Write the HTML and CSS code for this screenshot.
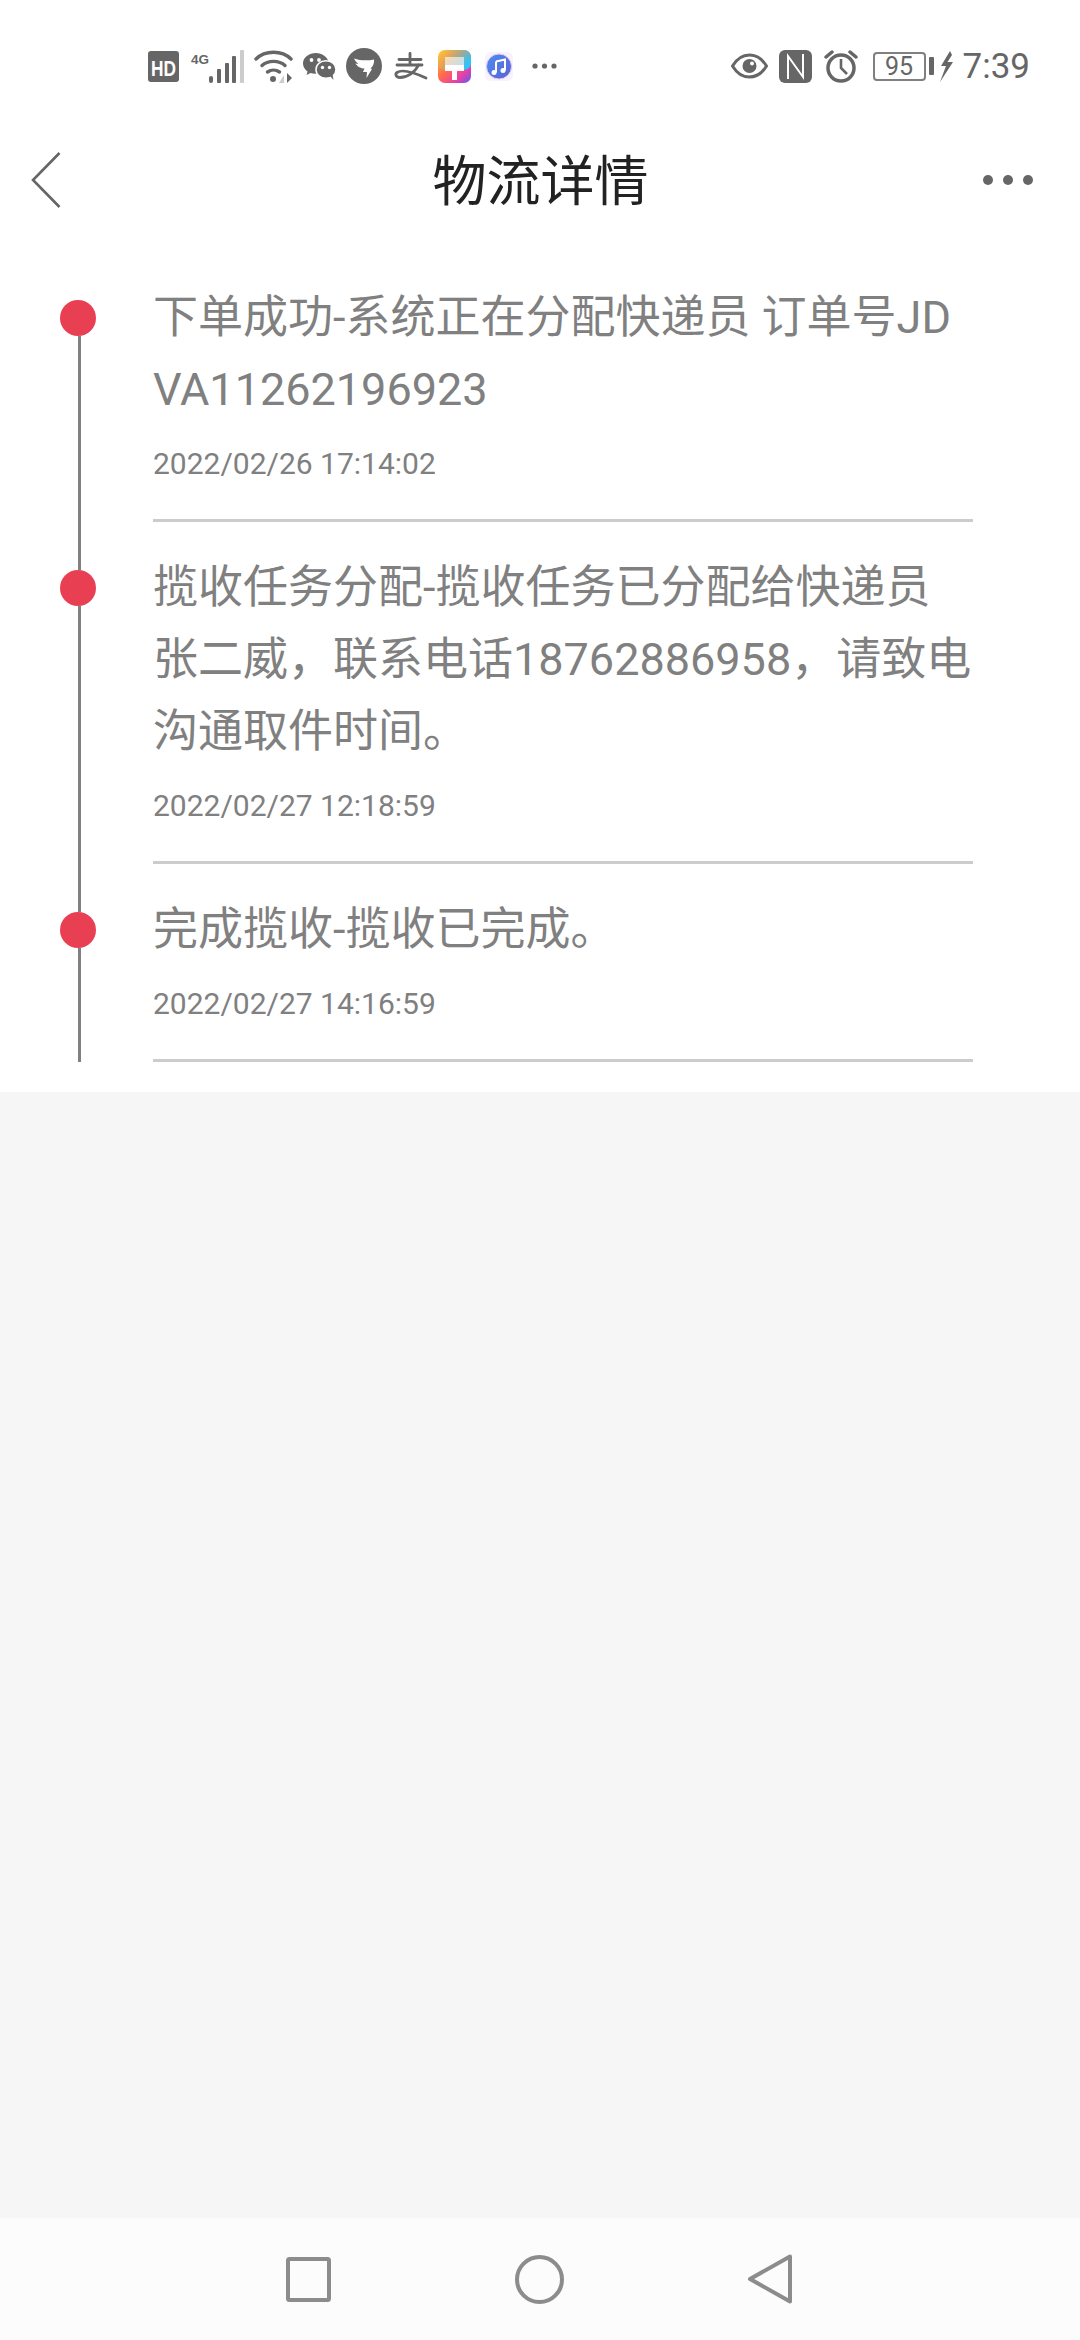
FILE: index.html
```html
<!DOCTYPE html>
<html lang="zh-CN">
<head>
    <meta charset="UTF-8">
    <meta name="viewport" content="width=device-width, initial-scale=1.0">
    <title>物流详情</title>
    <link rel="stylesheet" href="styles.css">
</head>
<body>
    <div class="status-bar">
        <div class="status-left">
            <svg class="ic-hd" width="31" height="31" viewBox="0 0 31 31">
                <rect width="31" height="31" rx="3" fill="#666"/>
                <text transform="translate(3 24.500) scale(1 1.250)" textLength="25" lengthAdjust="spacingAndGlyphs" class="hd-text">HD</text>
            </svg>
            <svg class="ic-signal" width="53" height="33" viewBox="0 0 53 33">
                <text x="0" y="14" textLength="18" lengthAdjust="spacingAndGlyphs" class="net-text">4G</text>
                <rect x="18" y="26" width="4" height="7" rx="2" fill="#666"/>
                <rect x="26" y="19" width="4" height="14" rx="1" fill="#666"/>
                <rect x="34" y="13" width="4" height="20" rx="1" fill="#666"/>
                <rect x="41" y="6" width="4" height="27" rx="1" fill="#666"/>
                <rect x="49" y="0" width="4" height="33" rx="1" fill="#ccc"/>
            </svg>
            <svg class="ic-wifi" width="39" height="33" viewBox="0 0 39 33" fill="none" stroke="#666" stroke-width="3.4" stroke-linecap="round">
                <path d="M2 9C11 0 28 0 37 9"/>
                <path d="M8 15.5C14 10 25 10 31 15.5"/>
                <path d="M13.5 22C17 19.500 22 19.500 25.500 22"/>
                <circle cx="19" cy="29" r="3" fill="#666" stroke="none"/>
                <path d="M30 25V33L25 33Z" fill="#ccc" stroke="none"/>
                <path d="M33 23V33L38 28Z" fill="#666" stroke="none"/>
            </svg>
            <svg class="ic-wechat" width="33" height="27" viewBox="0 0 33 27">
                <path d="M13 0C6 0 0 4.500 0 10.500C0 14 2 16.500 4.500 18.500L3.500 22L7.500 20C9 20.500 10.500 20.800 12 20.800C17 20.800 23 15 26 9.500C24.500 4 19 0 13 0Z" fill="#666"/>
                <ellipse cx="23" cy="16.500" rx="10" ry="8.800" fill="#666" stroke="#fff" stroke-width="1.500"/>
                <path d="M27 23L30.500 27L29.500 21Z" fill="#666"/>
                <circle cx="8.500" cy="7" r="1.900" fill="#fff"/>
                <circle cx="16" cy="7" r="1.900" fill="#fff"/>
                <circle cx="19.500" cy="14.500" r="1.700" fill="#fff"/>
                <circle cx="26.500" cy="14.500" r="1.700" fill="#fff"/>
            </svg>
            <svg class="ic-ding" width="36" height="36" viewBox="0 0 36 36">
                <circle cx="18" cy="18" r="18" fill="#666"/>
                <path d="M8 10.500C14 12.500 21 13 28 11.500C28.500 15 27 18.500 24.500 20.500L26 21L20.500 30L21 24L17 24L18.500 20.500C14 20.500 11 18 9.500 15.500L12.500 16C10.500 14.500 9 12.500 8 10.500Z" fill="#fff"/>
            </svg>
            <svg class="ic-alipay" width="33" height="26" viewBox="0 0 33 26" fill="none" stroke="#666" stroke-width="2.800" stroke-linecap="round">
                <path d="M5 6.500H27"/>
                <path d="M16 0.500V11.500"/>
                <path d="M3 12H28"/>
                <path d="M24.500 12C21 19.500 13 24.500 6 24.500C2 24.500 0.800 21 3 19.500C8 16 20 19.500 32 25"/>
            </svg>
            <svg class="ic-brush" width="33" height="33" viewBox="0 0 33 33">
                <defs>
                    <linearGradient id="brushBg" x1="0" y1="0" x2="1" y2="1">
                        <stop offset="0" stop-color="#ffd02e"/>
                        <stop offset="0.45" stop-color="#ff6a4d"/>
                        <stop offset="0.75" stop-color="#e83fa8"/>
                        <stop offset="1" stop-color="#5a5cf0"/>
                    </linearGradient>
                    <linearGradient id="brushBlue" x1="0" y1="0" x2="1" y2="0.400">
                        <stop offset="0" stop-color="#ffc83a" stop-opacity="0"/>
                        <stop offset="1" stop-color="#2fc4f2"/>
                    </linearGradient>
                </defs>
                <rect width="33" height="33" rx="7" fill="url(#brushBg)"/>
                <rect width="33" height="20" rx="7" fill="url(#brushBlue)"/>
                <path d="M7 7H26V15H7Z" fill="#fff" opacity="0.6"/>
                <path d="M7 15H26V21H19V30H14V21H7Z" fill="#fff"/>
            </svg>
            <svg class="ic-music" width="28" height="29" viewBox="0 0 28 29">
                <defs>
                    <linearGradient id="musicBg" x1="0" y1="0" x2="1" y2="1">
                        <stop offset="0" stop-color="#4d8cf0"/>
                        <stop offset="1" stop-color="#5a62d8"/>
                    </linearGradient>
                </defs>
                <rect width="28" height="29" rx="6" fill="#f7f2fc"/>
                <circle cx="14" cy="14.500" r="12.500" fill="url(#musicBg)" stroke="#e6c8f2" stroke-width="1"/>
                <path d="M11 9.500L20 7.500V18.500" fill="none" stroke="#fff" stroke-width="2"/>
                <path d="M11 9.500V20.500" fill="none" stroke="#fff" stroke-width="2"/>
                <circle cx="9" cy="20.500" r="2.500" fill="#fff"/>
                <circle cx="18" cy="18.500" r="2.500" fill="#fff"/>
            </svg>
            <svg class="ic-more" width="25" height="6" viewBox="0 0 25 6">
                <circle cx="3" cy="3" r="2.600" fill="#666"/>
                <circle cx="12.500" cy="3" r="2.600" fill="#666"/>
                <circle cx="22" cy="3" r="2.600" fill="#666"/>
            </svg>
        </div>
        <div class="status-right">
            <svg class="ic-eye" width="37" height="26" viewBox="0 0 37 26">
                <path d="M1.500 13C6 5.500 12 2 18.500 2C25 2 31 5.500 35.500 13C31 20.500 25 24 18.500 24C12 24 6 20.500 1.500 13Z" fill="none" stroke="#666" stroke-width="3"/>
                <circle cx="18.500" cy="13" r="7" fill="#666"/>
                <circle cx="21" cy="10.500" r="2" fill="#fff"/>
            </svg>
            <svg class="ic-nfc" width="33" height="33" viewBox="0 0 33 33">
                <rect width="33" height="33" rx="6" fill="#666"/>
                <path d="M9 29V6L24 27V4" fill="none" stroke="#fff" stroke-width="2"/>
            </svg>
            <svg class="ic-alarm" width="34" height="33" viewBox="0 0 34 33" fill="none" stroke="#666" stroke-width="3.500">
                <circle cx="17" cy="18" r="13"/>
                <path d="M17 9V18L23 24" stroke-width="2.600"/>
                <path d="M2 7L8 2" stroke-linecap="round"/>
                <path d="M32 7L26 2" stroke-linecap="round"/>
            </svg>
            <div class="battery"><span class="battery-num">95</span></div>
            <div class="battery-nub"></div>
            <svg class="ic-bolt" width="13" height="31" viewBox="0 0 13 31">
                <path d="M10 0L1 15H6L0 31L13 11H7.500L12 4Z" fill="#666"/>
            </svg>
            <span class="clock">7:39</span>
        </div>
    </div>

    <div class="top-bar">
        <svg class="back-icon" width="30" height="56" viewBox="0 0 30 56">
            <path d="M28.500 1L2 28L28.500 55" fill="none" stroke="#666" stroke-width="2.600"/>
        </svg>
        <h1 class="page-title">物流详情</h1>
        <div class="more-dots"><i></i><i></i><i></i></div>
    </div>

    <div class="track-list">
        <div class="track-item">
            <div class="rail">
                <div class="rail-line rail-top rail-first"></div>
                <div class="rail-dot"></div>
                <div class="rail-line rail-fill"></div>
            </div>
            <div class="track-body">
                <p class="track-text">下单成功-系统正在分配快递员 订单号JDVA11262196923</p>
                <p class="track-time">2022/02/26 17:14:02</p>
            </div>
        </div>
        <div class="track-item">
            <div class="rail">
                <div class="rail-line rail-top"></div>
                <div class="rail-dot"></div>
                <div class="rail-line rail-fill"></div>
            </div>
            <div class="track-body">
                <p class="track-text">揽收任务分配-揽收任务已分配给快递员张二威，联系电话18762886958，请致电沟通取件时间。</p>
                <p class="track-time">2022/02/27 12:18:59</p>
            </div>
        </div>
        <div class="track-item">
            <div class="rail">
                <div class="rail-line rail-top"></div>
                <div class="rail-dot"></div>
                <div class="rail-line rail-fill"></div>
            </div>
            <div class="track-body">
                <p class="track-text">完成揽收-揽收已完成。</p>
                <p class="track-time">2022/02/27 14:16:59</p>
            </div>
        </div>
    </div>

    <div class="empty-area"></div>

    <div class="nav-bar">
        <svg width="45" height="45" viewBox="0 0 45 45">
            <rect x="2" y="2" width="41" height="41" rx="1.500" fill="none" stroke="#8c8c8c" stroke-width="4"/>
        </svg>
        <svg width="49" height="49" viewBox="0 0 49 49">
            <circle cx="24.500" cy="24.500" r="22.500" fill="none" stroke="#8c8c8c" stroke-width="4"/>
        </svg>
        <svg width="44" height="50" viewBox="0 0 44 50">
            <path d="M42 2.500V47.500L2 25Z" fill="none" stroke="#8c8c8c" stroke-width="4" stroke-linejoin="round"/>
        </svg>
    </div>
</body>
</html>
```

FILE: styles.css
```css
/* Reset and base */
* {
    margin: 0;
    padding: 0;
    box-sizing: border-box;
}

body {
    width: 1080px;
    height: 2340px;
    display: flex;
    flex-direction: column;
    background-color: #fff;
    font-family: Roboto, "Noto Sans CJK SC", sans-serif;
    overflow: hidden;
}

/* Status bar */
.status-bar {
    height: 132px;
    display: flex;
    justify-content: space-between;
    align-items: center;
    padding: 0 50px 0 148px;
}

.status-left, .status-right {
    display: flex;
    align-items: center;
}

.status-left svg {
    overflow: visible;
}

.hd-text {
    font: bold 17px "Liberation Sans", sans-serif;
    fill: #fff;
}

.net-text {
    font: bold 13px "Liberation Sans", sans-serif;
    fill: #666;
}

.ic-signal { margin-left: 12px; }
.ic-wifi { margin-left: 10px; }
.ic-wechat { margin-left: 10px; }
.ic-ding { margin-left: 10px; }
.ic-alipay { margin-left: 12px; }
.ic-brush { margin-left: 11px; }
.ic-music { margin-left: 14px; }
.ic-more { margin-left: 19px; }

.ic-nfc { margin-left: 11px; }
.ic-alarm { margin-left: 12px; }

.battery {
    width: 53px;
    height: 29px;
    margin-left: 15px;
    border: 2px solid #808080;
    border-radius: 4px;
    display: flex;
    align-items: center;
    justify-content: center;
}

.battery-num {
    font-size: 25px;
    color: #666;
}

.battery-nub {
    width: 5px;
    height: 18px;
    margin-left: 3px;
    background-color: #666;
    border-radius: 1px;
}

.ic-bolt { margin-left: 6px; }

.clock {
    margin-left: 10px;
    font-size: 35px;
    color: #666;
}

/* Top bar */
.top-bar {
    height: 96px;
    display: flex;
    align-items: center;
    justify-content: space-between;
    padding: 0 47px 0 31px;
}

.page-title {
    font-size: 54px;
    font-weight: 400;
    color: #222;
    margin-left: 37px;
    margin-bottom: 6px;
}

.more-dots {
    display: flex;
    gap: 10px;
}

.more-dots i {
    width: 10px;
    height: 10px;
    border-radius: 50%;
    background-color: #666;
}

/* Tracking list */
.track-list {
    height: 864px;
    padding-top: 24px;
    background-color: #fff;
}

.track-item {
    display: flex;
}

.rail {
    width: 153px;
    padding-left: 60px;
    display: flex;
    flex-direction: column;
}

.rail-line {
    width: 3px;
    margin-left: 18px;
    background-color: #808080;
}

.rail-top {
    height: 48px;
}

.rail-first {
    background-color: transparent;
}

.rail-fill {
    flex: 1;
}

.rail-dot {
    width: 36px;
    height: 36px;
    border-radius: 50%;
    background-color: #e83f52;
}

.track-body {
    width: 820px;
    padding-top: 30px;
    border-bottom: 3px solid #ccc;
}

.track-text {
    font-size: 45px;
    line-height: 72px;
    color: #808080;
    word-break: break-all;
}

.track-time {
    font-size: 30px;
    line-height: 40px;
    margin-top: 18px;
    padding-bottom: 35px;
    color: #808080;
}

.empty-area {
    flex: 1;
    background-color: #f6f6f6;
}

/* Navigation bar */
.nav-bar {
    height: 122px;
    display: flex;
    align-items: center;
    background-color: #fcfcfc;
    padding-left: 286px;
    gap: 184px;
}
```
